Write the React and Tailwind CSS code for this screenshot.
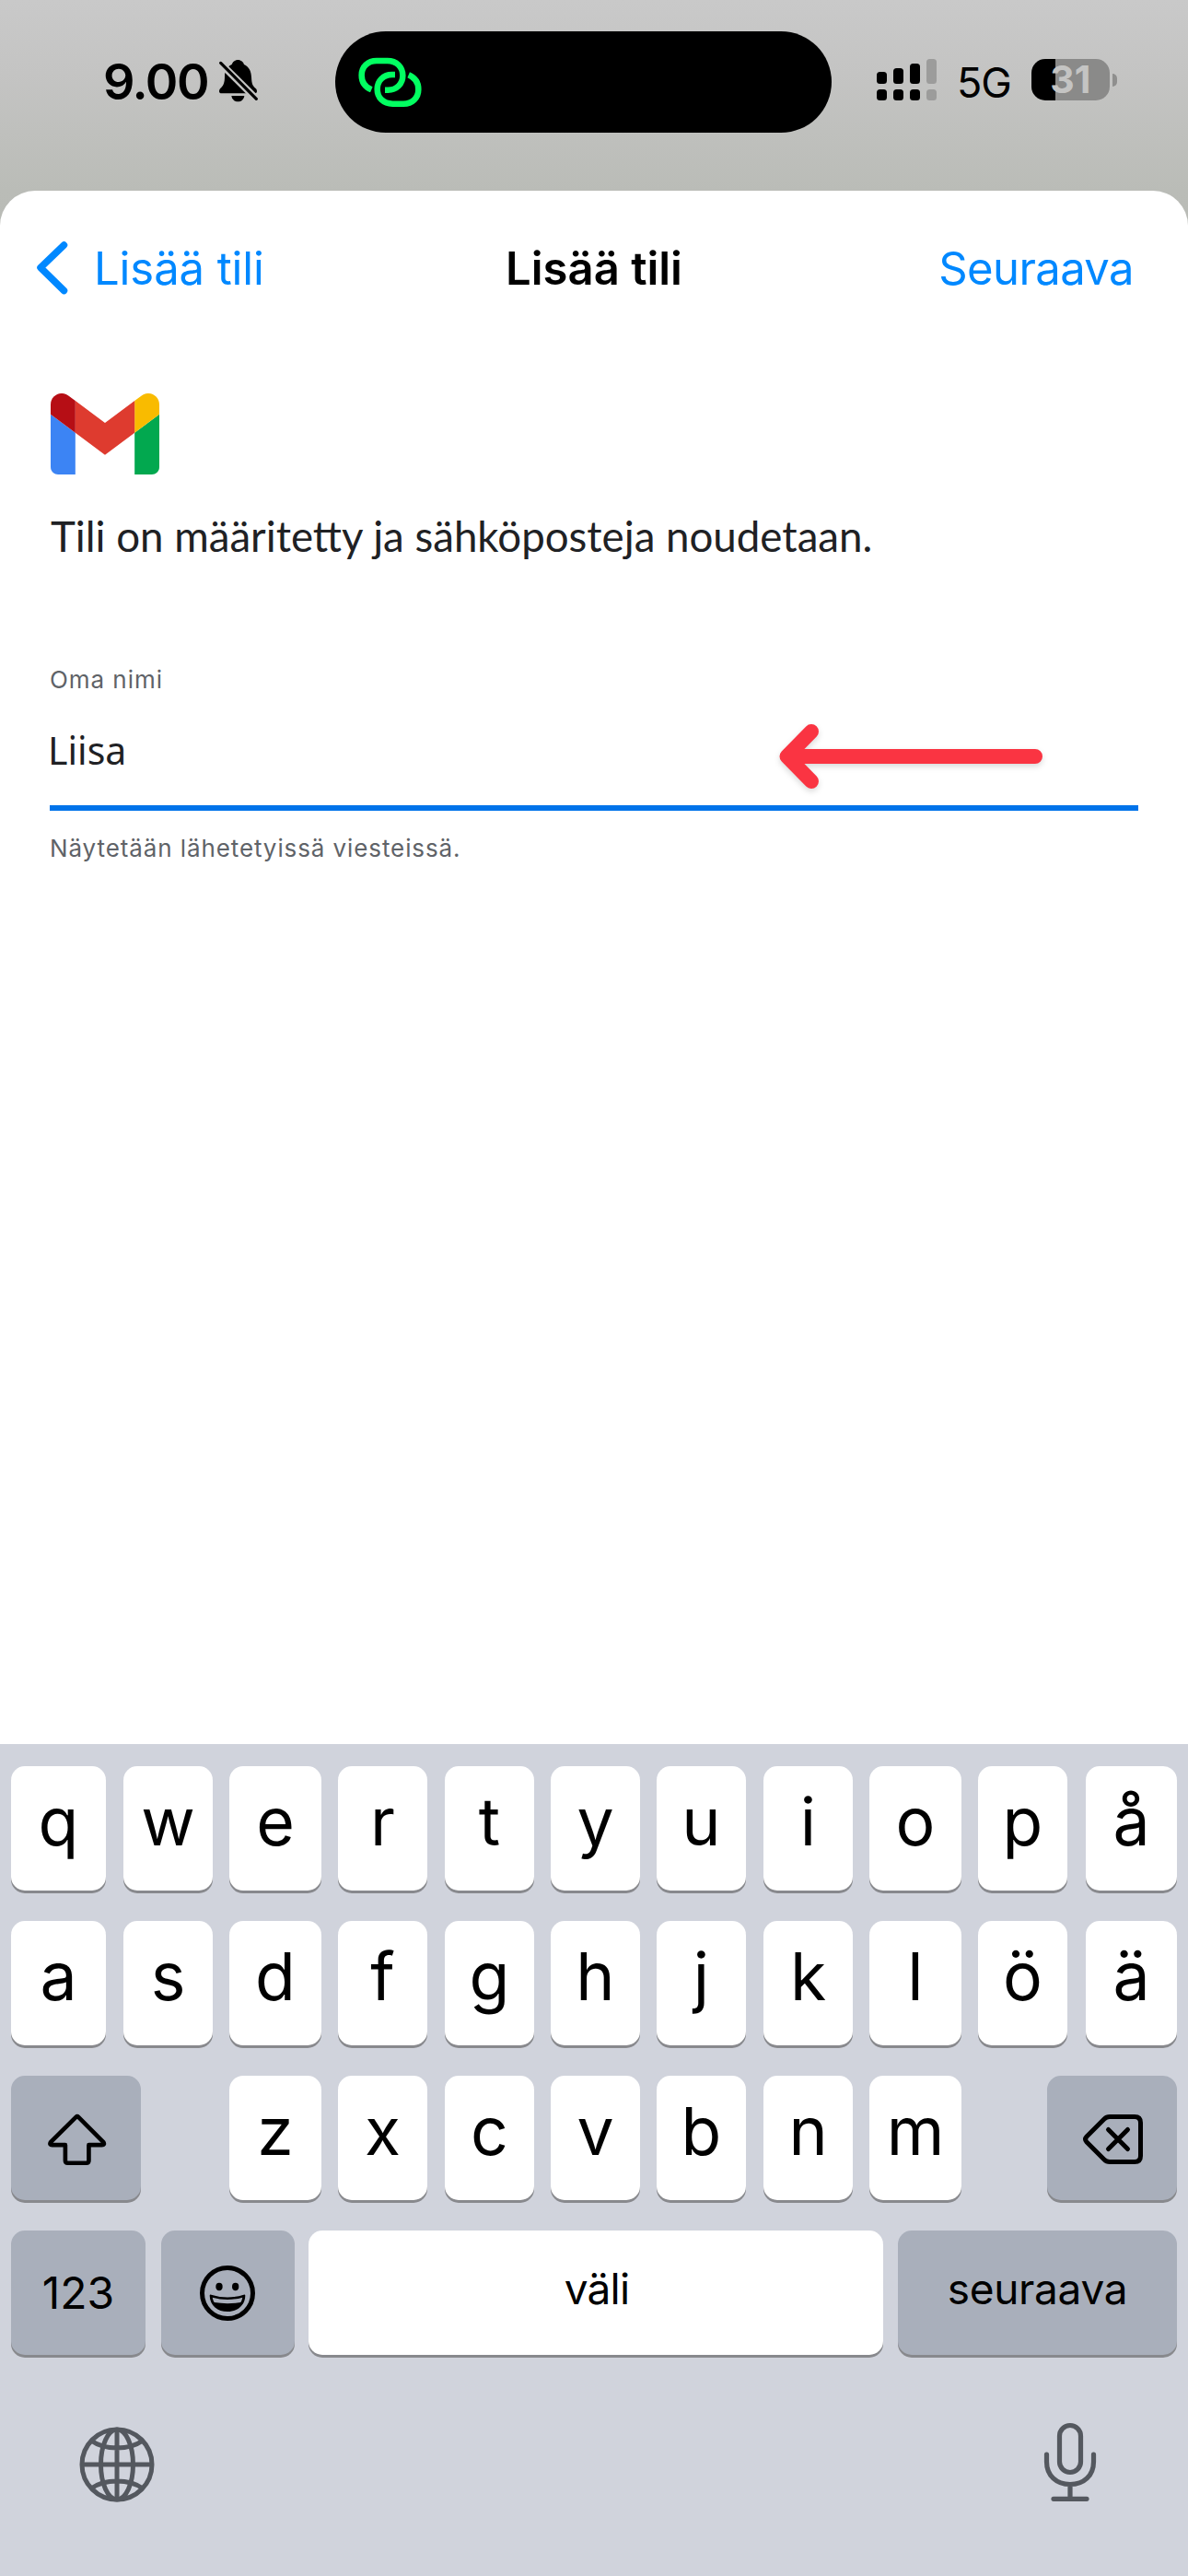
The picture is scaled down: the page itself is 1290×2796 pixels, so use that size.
import React from "react";

const ROWS = [
  [["q", 103], ["w", 97, 19], ["e", 100, 18], ["r", 97, 18], ["t", 97, 19], ["y", 97, 18], ["u", 97, 18], ["i", 97, 19], ["o", 100, 18], ["p", 97, 18], ["å", 99, 20]],
  [["a", 103], ["s", 97, 19], ["d", 100, 18], ["f", 97, 18], ["g", 97, 19], ["h", 97, 18], ["j", 97, 18], ["k", 97, 19], ["l", 100, 18], ["ö", 97, 18], ["ä", 99, 20]],
];
const ROW3 = [["z", 100, 96], ["x", 97, 18], ["c", 97, 19], ["v", 97, 18], ["b", 97, 18], ["n", 97, 19], ["m", 100, 18]];

const KEY = "flex h-[135px] shrink-0 items-center justify-center rounded-[15px] text-black shadow-[0_3px_0_#88898d]";

function LetterKey({ k }) {
  return (
    <div className={KEY + " bg-white pb-[13px] text-[71.5px] font-[370] leading-none"} style={{ width: k[1], marginLeft: k[2] || 0 }}>
      {k[0]}
    </div>
  );
}

function BellOff() {
  return (
    <svg className="ml-[11px] -mt-[3px] h-[47px] w-[44px] shrink-0" viewBox="444 73 132 141">
      <mask id="cut">
        <rect x="440" y="70" width="140" height="150" fill="#fff" />
        <path d="M441 77L578 213" stroke="#000" strokeWidth="23" />
      </mask>
      <g mask="url(#cut)">
        <path d="M508 76C518 76 526 83 528 91C544 99 551 112 552 132C553 155 556 160 567 170C572 176 571 185 562 185H455C446 185 445 176 450 170C461 160 465 150 465 130C465 112 472 99 488 91C490 83 498 76 508 76Z" />
        <path d="M487 193H529C527 205 519 212 508 212C497 212 489 205 487 193Z" />
      </g>
      <path d="M452 86L568 203" stroke="#000" strokeWidth="9.5" strokeLinecap="round" />
    </svg>
  );
}

function LinkIcon() {
  const d = "M938 170C917 161 906 144 906 123C906 95 926 76 955 76H990C1020 76 1040 96 1040 124C1040 151 1020 171 992 171H982";
  return (
    <svg className="h-[55px] w-[69px]" viewBox="895 64 207 165" fill="none" stroke="#02ff61" strokeWidth="19.5">
      <path d={d} />
      <path d={d} transform="rotate(180 998.5 146)" />
    </svg>
  );
}

function Signal() {
  const bars = [
    ["h-[13px]", "bg-black"],
    ["h-[17px]", "bg-black"],
    ["h-[22px]", "bg-black"],
    ["h-[27px]", "bg-[#9c9c9b]"],
  ];
  return (
    <div className="-mt-[5px] flex h-[45px] items-end gap-[7px]">
      {bars.map(([h, c], i) => (
        <div key={i} className="flex flex-col gap-[6px]">
          <div className={"w-[11px] rounded-[3.5px] " + h + " " + c} />
          <div className={"h-[12px] w-[11px] rounded-[3.5px] " + c} />
        </div>
      ))}
    </div>
  );
}

function StatusBar() {
  return (
    <div className="flex h-[178px] items-center">
      <div className="flex w-[364px] items-center pl-[112px]">
        <span className="text-[54px] font-semibold leading-none tracking-[-1.5px]">9.00</span>
        <BellOff />
      </div>
      <div className="flex h-[110px] w-[539px] items-center rounded-full bg-black pl-[25px]">
        <LinkIcon />
      </div>
      <div className="flex items-center pl-[49px]">
        <Signal />
        <span className="ml-[22px] text-[45px] leading-none tracking-[-1px]">5G</span>
        <div className="-mt-[5px] ml-[22px] flex h-[45px] w-[85px] items-center justify-center rounded-[15px] bg-[linear-gradient(to_right,#000_26px,#8a8a89_26px)]">
          <span className="text-[41px] font-bold leading-[45px] text-[#c4c4c3]">31</span>
        </div>
        <div className="-mt-[5px] ml-[3px] h-[14px] w-[5px] rounded-r-full bg-[#8f8f8e]" />
      </div>
    </div>
  );
}

function Keyboard() {
  return (
    <div className="mt-auto flex h-[903px] flex-col gap-[33px] bg-[#d0d3dc] px-[12px] pt-[24px]">
      {ROWS.map((row, i) => (
        <div key={i} className="flex">
          {row.map((k) => <LetterKey key={k[0]} k={k} />)}
        </div>
      ))}
      <div className="flex">
        <div className={KEY + " w-[141px] bg-[#a9afbb] pl-[2px] pt-[3px]"}>
          <svg className="h-[57px] w-[65px]" viewBox="122 70 196 170" fill="none" stroke="#000" strokeWidth="14" strokeLinejoin="round">
            <path d="M217 81Q221 77 225 81L307 163Q312 172 302 172H259V223Q259 231 251 231H190Q182 231 182 223V172H139Q129 172 134 163Z" />
          </svg>
        </div>
        {ROW3.map((k) => <LetterKey key={k[0]} k={k} />)}
        <div className={KEY + " ml-auto w-[141px] bg-[#a9afbb] pl-[2px] pt-[3px]"}>
          <svg className="h-[56px] w-[67px]" viewBox="0 0 67 56" fill="none" stroke="#000" strokeWidth="5" strokeLinecap="round" strokeLinejoin="round">
            <path d="M30 3.5H57Q63.5 3.5 63.5 10V46Q63.5 52.5 57 52.5H30Q26.500 52.500 24 50L5 31Q2.200 28 5 25L24 6Q26.500 3.500 30 3.500Z" />
            <path d="M28.500 17.500L49.500 38.500M49.500 17.500L28.500 38.500" />
          </svg>
        </div>
      </div>
      <div className="flex">
        <div className={KEY + " w-[146px] bg-[#a9afbb] text-[48px] leading-none"}>123</div>
        <div className={KEY + " ml-[17px] w-[145px] bg-[#a9afbb] pr-[2px]"}>
          <svg className="h-[62px] w-[62px]" viewBox="618 564 186 186">
            <circle cx="711" cy="657" r="82.500" fill="none" stroke="#000" strokeWidth="15" />
            <ellipse cx="684" cy="636" rx="11" ry="12.500" />
            <ellipse cx="737" cy="636" rx="11" ry="12.500" />
            <path d="M653 665Q653 661 658 662Q711 679 764 662Q769 661 769 665C768 697 743 717 711 717C679 717 654 697 653 665Z" />
            <path fill="#a9afbb" d="M662 671Q711 685 760 671Q758 681 754 687Q711 694 668 687Q664 681 662 671Z" />
          </svg>
        </div>
        <div className={KEY + " ml-[15px] w-[624px] bg-white pb-[9px] pl-[2px] text-[46px] leading-none tracking-[-0.8px]"}>väli</div>
        <div className={KEY + " ml-auto w-[303px] bg-[#a9afbb] pb-[9px] text-[46px] leading-none tracking-[-0.3px]"}>seuraava</div>
      </div>
      <div className="flex items-center justify-between pl-[73px] pr-[87px] pt-[40px]">
        <svg className="mt-[3px] h-[84px] w-[84px]" viewBox="-42 -42 84 84" fill="none" stroke="#54585f" strokeWidth="5">
          <circle r="38" />
          <ellipse rx="17.500" ry="38" />
          <path d="M0 -38V38M-38 0H38M-28 -26Q-17 -18 0 -18Q17 -18 28 -26M-28 26Q-17 18 0 18Q17 18 28 26" />
        </svg>
        <svg className="h-[88px] w-[58px]" viewBox="1133 2629 58 88" fill="none" stroke="#54585f" strokeWidth="5.200" strokeLinecap="round">
          <rect x="1150.500" y="2632.500" width="23" height="51" rx="11.500" />
          <path d="M1136.500 2664V2672C1136.500 2687 1147 2696.500 1162 2696.500C1177 2696.500 1187.500 2687 1187.500 2672V2664M1162 2697V2712M1144 2712.300H1180" />
        </svg>
      </div>
    </div>
  );
}

export default function App() {
  return (
    <div className="flex h-[2796px] w-[1290px] flex-col overflow-hidden bg-[linear-gradient(to_bottom,#c9c9c9_0px,#c4c4c3_80px,#babcb7_207px,#b9bbb6_250px)] font-['Inter',sans-serif] text-black">
      <StatusBar />
      <main className="mt-[29px] flex flex-1 flex-col rounded-t-[38px] bg-white">
        <nav className="grid h-[168px] grid-cols-[1fr_auto_1fr] items-center px-[38px] text-[49px] leading-none">
          <div className="flex items-center text-[#0088ff]">
            <svg className="h-[60px] w-[37px]" viewBox="0 0 37 60" fill="none" stroke="#0088ff" strokeWidth="7.500" strokeLinecap="round" strokeLinejoin="round">
              <path d="M31.500 5L6 29.500L31.500 54.500" />
            </svg>
            <span className="ml-[27px] tracking-[-0.1px]">Lisää tili</span>
          </div>
          <h1 className="justify-self-center font-semibold">Lisää tili</h1>
          <span className="justify-self-end pr-[21px] tracking-[-0.6px] text-[#0088ff]">Seuraava</span>
        </nav>
        <section className="px-[54px] pt-[52px]">
          <svg className="ml-[1px] h-[88px] w-[118px]" viewBox="52 42 88 66" preserveAspectRatio="none">
            <path fill="#3c84f4" d="M58 108h14V74L52 59v43c0 3.320 2.690 6 6 6" />
            <path fill="#02a84f" d="M120 108h14c3.320 0 6-2.690 6-6V59l-20 15" />
            <path fill="#f9bb00" d="M120 48v26l20-15v-8c0-7.420-8.470-11.650-14.400-7.200" />
            <path fill="#de3b2f" d="M72 74V48l24 18 24-18v26L96 92" />
            <path fill="#b60e15" d="M52 51v8l20 15V48l-5.600-4.200c-5.940-4.450-14.400-.220-14.400 7.200" />
          </svg>
          <p className="mt-[37px] h-[60px] whitespace-nowrap pl-[1px] font-['Lato',sans-serif] text-[45.65px] leading-[60px] text-[#202124]">Tili on määritetty ja sähköposteja noudetaan.</p>
          <p className="mt-[106px] h-[40px] text-[26px] leading-[40px] tracking-[0.95px] text-[#5f6368]">Oma nimi</p>
          <div className="flex h-[122px] items-center justify-between border-b-[6px] border-[#0073ea] pr-[100px]">
            <span className="-ml-[2px] -mt-[4px] font-['Noto_Sans',sans-serif] text-[41px] leading-none text-[#202124]">Liisa</span>
            <svg className="mt-[16px] h-[82px] w-[294px] drop-shadow-[0_3px_3px_rgba(0,0,0,0.15)]" viewBox="842 783 294 82" fill="none" stroke="#fa3442" strokeWidth="16" strokeLinecap="round" strokeLinejoin="round">
              <path d="M1124 821H856M881 794L854.500 821L881 848" />
            </svg>
          </div>
          <p className="mt-[21px] h-[40px] text-[26px] leading-[40px] tracking-[0.9px] text-[#5f6368]">Näytetään lähetetyissä viesteissä.</p>
        </section>
        <Keyboard />
      </main>
    </div>
  );
}
